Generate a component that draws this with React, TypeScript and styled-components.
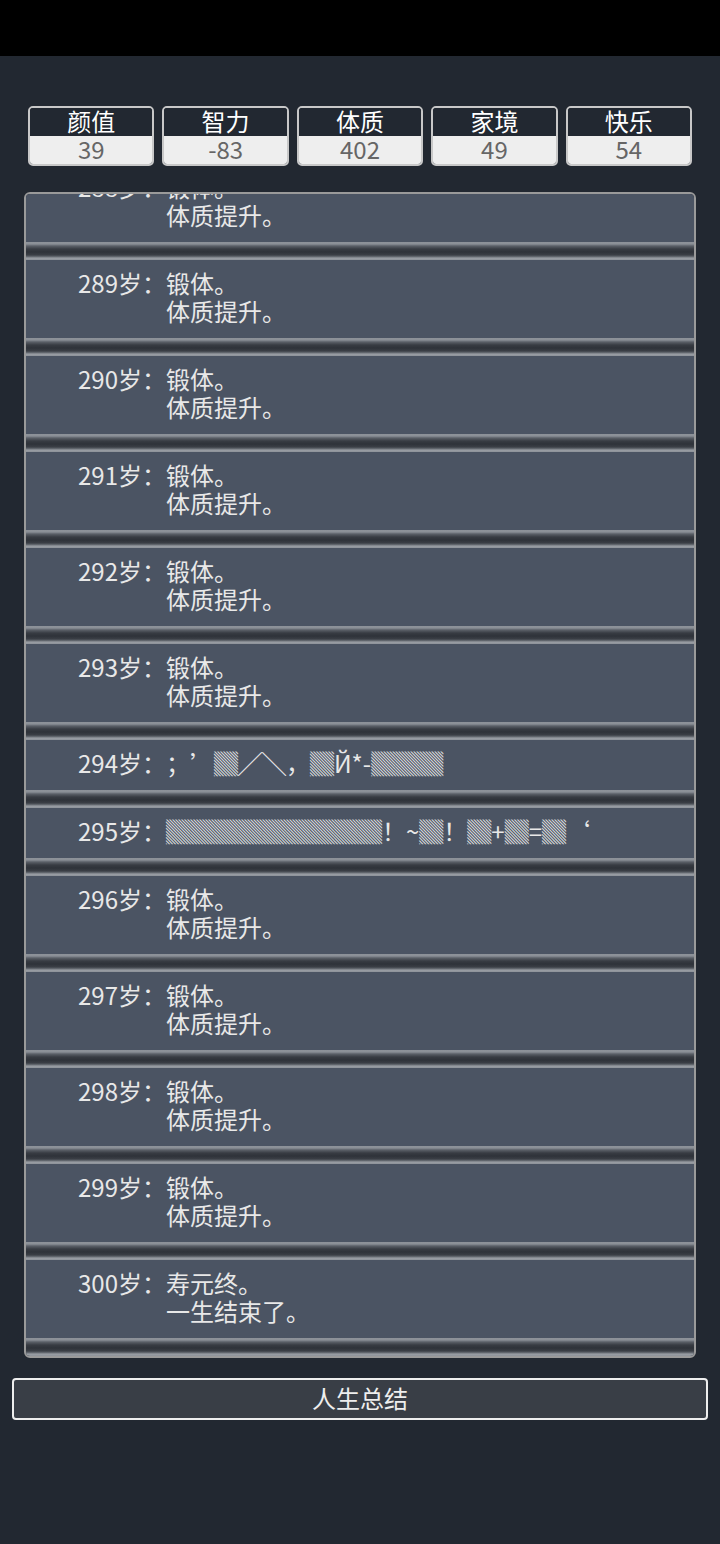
import { useLayoutEffect, useRef } from 'react'
import styled, { createGlobalStyle } from 'styled-components'

const GlobalStyle = createGlobalStyle`
  html, body {
    margin: 0;
    padding: 0;
    background-color: #222831;
  }
  body {
    font-family: "Noto Sans CJK SC", "Noto Sans", sans-serif;
    color: #e8e8e8;
    text-spacing-trim: space-all;
  }
  * {
    box-sizing: border-box;
  }
`

const Page = styled.div`
  height: 1544px;
  display: flex;
  flex-direction: column;
  background-color: #222831;
`

const TopBar = styled.div`
  height: 56px;
  flex: 0 0 56px;
  background-color: #000;
`

const Content = styled.main`
  display: flex;
  flex-direction: column;
  padding: 50px 12px 0;
`

const StatRow = styled.ul`
  display: flex;
  gap: 8px;
  margin: 0 16px;
  padding: 0;
  list-style: none;
`

const StatBox = styled.li`
  flex: 1;
  border: 2px solid #c8c8c8;
  border-radius: 5px;
  overflow: hidden;
  text-align: center;
  font-size: 24px;
  line-height: 26px;
`

const StatName = styled.div`
  padding-bottom: 2px;
  background-color: #222831;
  color: #ffffff;
`

const StatValue = styled.div`
  padding-bottom: 2px;
  background-color: #eeeeee;
  color: #666666;
`

const Trajectory = styled.ul`
  margin: 26px 12px 0;
  padding: 0;
  list-style: none;
  height: 1166px;
  overflow-y: auto;
  border: 2px solid #9a9a9a;
  border-radius: 6px;
  background-color: #393e46;
  scrollbar-width: none;
  &::-webkit-scrollbar {
    display: none;
  }
`

const Entry = styled.li`
  display: flex;
  padding: 9px 0 13px;
  background-color: #4b5463;
  font-size: 24px;
  line-height: 28px;
`

const Age = styled.span`
  flex: 0 0 140px;
  text-align: right;
  white-space: nowrap;
`

const Lines = styled.div`
  display: flex;
  flex-direction: column;
  white-space: pre;
`

const Divider = styled.div`
  height: 18px;
  background: linear-gradient(
    to bottom,
    #8d9299 0px,
    #8a8f96 2px,
    #5a5f67 4px,
    #383c43 7px,
    #2e3239 10px,
    #3b3f46 13px,
    #6c7178 15px,
    #9a9ea4 16px,
    #8d9299 18px
  );
`

const SummaryButton = styled.button`
  margin-top: 20px;
  height: 42px;
  border: 2px solid #eeeeee;
  border-radius: 4px;
  background-color: #393e46;
  color: #eeeeee;
  font-family: "Noto Sans CJK SC", "Noto Sans", sans-serif;
  font-size: 24px;
  line-height: 26px;
  padding: 0 0 2px;
  cursor: pointer;
`

const stats = [
  { name: '颜值', value: 39 },
  { name: '智力', value: -83 },
  { name: '体质', value: 402 },
  { name: '家境', value: 49 },
  { name: '快乐', value: 54 },
]

const train = ['锻体。', '体质提升。']

const special: Record<number, string[]> = {
  294: ['；’▓╱╲，▓Й*-▓▓▓'],
  295: ['▓▓▓▓▓▓▓▓▓！~▓！▓+▓=▓‘'],
  300: ['寿元终。', '一生结束了。'],
}

const entries = Array.from({ length: 21 }, (_, i) => {
  const age = 280 + i
  return { age, lines: special[age] ?? train }
})

const App = () => {
  const listRef = useRef<HTMLUListElement>(null)

  useLayoutEffect(() => {
    const el = listRef.current
    if (el) el.scrollTop = el.scrollHeight
  }, [])

  return (
    <Page>
      <GlobalStyle />
      <TopBar />
      <Content>
        <StatRow>
          {stats.map((s) => (
            <StatBox key={s.name}>
              <StatName>{s.name}</StatName>
              <StatValue>{s.value}</StatValue>
            </StatBox>
          ))}
        </StatRow>
        <Trajectory ref={listRef}>
          {entries.map((e) => (
            <div key={e.age}>
              <Entry>
                <Age>{e.age}岁：</Age>
                <Lines>
                  {e.lines.map((l, i) => (
                    <span key={i}>{l}</span>
                  ))}
                </Lines>
              </Entry>
              <Divider />
            </div>
          ))}
        </Trajectory>
        <SummaryButton>人生总结</SummaryButton>
      </Content>
    </Page>
  )
}

export default App
